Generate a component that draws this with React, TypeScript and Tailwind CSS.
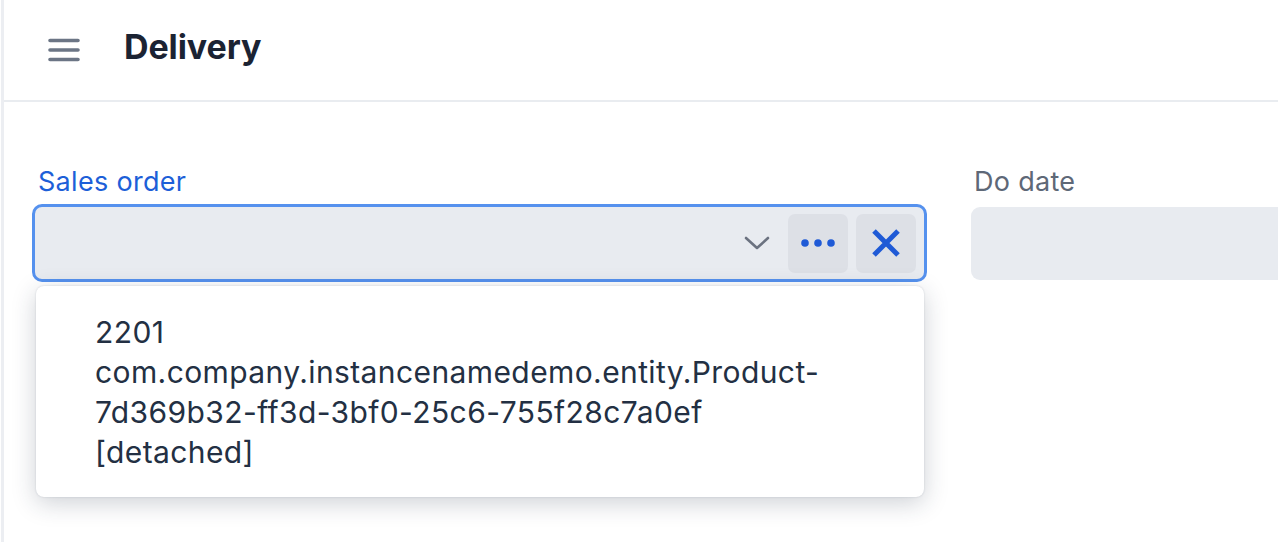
import React from 'react'

function MenuIcon() {
  return (
    <svg width="32" height="24" viewBox="0 0 32 24" fill="none" stroke="#6b7585" strokeWidth={3.6} strokeLinecap="round">
      <path d="M2 2.5h28M2 12h28M2 21.5h28" />
    </svg>
  )
}

function ChevronDown() {
  return (
    <svg width="26" height="14" viewBox="0 0 26 14" fill="none" stroke="#6b7280" strokeWidth={2.6} strokeLinecap="round" strokeLinejoin="round">
      <path d="M2 2l11 10L24 2" />
    </svg>
  )
}

function Dots() {
  return (
    <svg width="34" height="8" viewBox="0 0 34 8" fill="#1f5ad6">
      <circle cx="4" cy="4" r="3.8" />
      <circle cx="17" cy="4" r="3.8" />
      <circle cx="30" cy="4" r="3.8" />
    </svg>
  )
}

function Cross() {
  return (
    <svg width="30" height="28" viewBox="0 0 30 28" fill="none" stroke="#1f5ad6" strokeWidth={5}>
      <path d="M3 2l24 24M27 2L3 26" />
    </svg>
  )
}

export default function App() {
  return (
    <div
      className="flex h-[542px] w-[1278px] overflow-hidden bg-white"
      style={{ fontFamily: 'Inter, "Noto Sans", sans-serif' }}
    >
      <div className="w-[1px] shrink-0 bg-white" />
      <div className="w-[3px] shrink-0 bg-[#eceef2]" />
      <div className="flex min-w-0 flex-1 flex-col">
        {/* Header */}
        <header className="flex h-[102px] shrink-0 items-center border-b-2 border-[#e9ecf0] pl-[44px]">
          <MenuIcon />
          <h1 className="ml-[44px] pb-[8px] text-[34px] font-bold tracking-[-0.1px] text-[#1b2333]">Delivery</h1>
        </header>

        {/* Form */}
        <div className="flex gap-[44px] pl-[28px] pt-[62px]">
          <div className="relative flex w-[895px] shrink-0 flex-col">
            <label className="pl-[6px] text-[27px] leading-[36px] tracking-[0.3px] text-[#1d5fd8]">Sales order</label>
            <div className="mt-[4px] flex h-[78px] items-center rounded-[10px] border-[3px] border-[#5591ee] bg-[#e8ebf0] pr-[8px]">
              <div className="flex-1" />
              <ChevronDown />
              <button className="ml-[18px] flex h-[59px] w-[60px] items-center justify-center rounded-[7px] bg-[#dde0e6]">
                <Dots />
              </button>
              <button className="ml-[8px] flex h-[59px] w-[60px] items-center justify-center rounded-[7px] bg-[#dde0e6]">
                <Cross />
              </button>
            </div>

            {/* Dropdown overlay */}
            <div className="absolute left-[4px] right-[3px] top-[122px] rounded-[8px] bg-white pb-[25px] pl-[59px] pr-[20px] pt-[26px] shadow-[0_6px_24px_rgba(30,45,70,0.22),0_0_2px_rgba(30,45,70,0.18)]">
              <p className="text-[30px] leading-[40px] tracking-[0.4px] text-[#233043]">
                2201
                <br />
                com.company.instancenamedemo.entity.Product-
                <br />
                7d369b32-ff3d-3bf0-25c6-755f28c7a0ef
                <br />
                [detached]
              </p>
            </div>
          </div>

          <div className="flex w-[895px] shrink-0 flex-col">
            <label className="pl-[3px] text-[27px] leading-[36px] tracking-[0.3px] text-[#5e6877]">Do date</label>
            <div className="mt-[7px] h-[73px] rounded-[9px] bg-[#e8ebf0]" />
          </div>
        </div>
      </div>
    </div>
  )
}
